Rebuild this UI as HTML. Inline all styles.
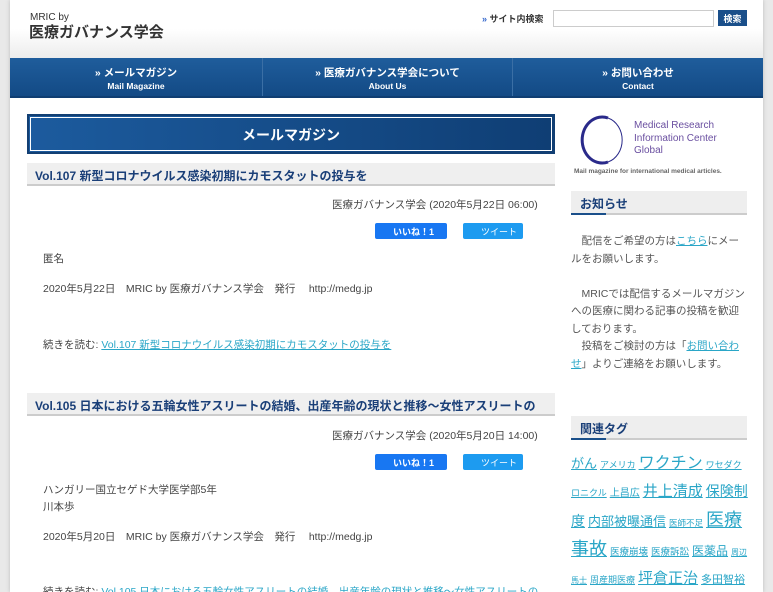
<!DOCTYPE html>
<html><head><meta charset="utf-8"><style>
*{margin:0;padding:0;box-sizing:border-box}
html,body{width:773px;height:592px;overflow:hidden}
body{background:#e9e9e9;font-family:"Liberation Sans","Noto Sans CJK JP",sans-serif;color:#444;font-size:10.5px;position:relative}
.wrap{position:absolute;left:10px;top:0;width:753px;height:592px;background:#fff;box-shadow:0 0 4px #bbb}
.hdr{position:absolute;left:10px;top:0;width:753px;height:58px;background:linear-gradient(#fff 50%,#ececec)}
.abs{position:absolute}
.nav{position:absolute;left:10px;top:58px;width:753px;height:40px;background:linear-gradient(#1f5d9c,#134a85);border-bottom:2px solid #0f3e72}
.nav .c{position:absolute;top:0;height:38px;color:#fff;text-align:center;font-weight:bold}
.nav .j{font-size:10.5px;margin-top:7px}.nav .e{font-size:8.5px;margin-top:1px}
a{color:#2aa6c7;text-decoration:underline}
.h2{position:absolute;left:27px;width:528px;height:23px;background:#efefef;border-bottom:2px solid #ccc;color:#1a3f78;font-size:12px;font-weight:bold;padding:4px 0 0 8px;white-space:nowrap;overflow:hidden}
.h2 i{position:absolute;left:0;bottom:-2px;width:105px;height:2px;background:#1a4f8a}
.sh{position:absolute;left:571px;width:176px;height:24px;background:#eee;border-bottom:2px solid #ccc;color:#1a3f78;font-size:12px;font-weight:bold;padding:4px 0 0 9px}
.sh:after{content:"";position:absolute;left:0;bottom:-2px;width:35px;height:2px;background:#1a4f8a}
.fb{position:absolute;width:72px;height:16px;background:#1877f2;color:#fff;border-radius:2px;font-size:9px;font-weight:bold;padding:2px 0 0 18px}
.tw{position:absolute;width:60px;height:16px;background:#1d9bf0;color:#fff;border-radius:2px;font-size:9px;padding:2px 0 0 18px}
.t{font-size:10.5px;white-space:nowrap}
.tags{position:absolute;left:571px;top:451px;width:178px;line-height:26px;word-break:break-all}
.tags a{margin-right:3px}
</style></head><body>
<div class="wrap"></div>
<div class="hdr"></div>
<div class="abs" style="left:30px;top:12px;font-size:10px;color:#333">MRIC by</div>
<div class="abs" style="left:29px;top:21px;font-size:15px;color:#333;font-weight:bold">医療ガバナンス学会</div>
<div class="abs" style="left:482px;top:12px;font-size:9px;color:#333;font-weight:bold"><span style="color:#36c">»</span> サイト内検索</div>
<div class="abs" style="left:553px;top:10px;width:161px;height:17px;border:1px solid #ccc;background:#fff"></div>
<div class="abs" style="left:718px;top:10px;width:29px;height:16px;background:#1a4f8a;color:#fff;font-size:9px;font-weight:bold;text-align:center;padding-top:2px">検索</div>
<div class="nav">
<div class="c" style="left:0;width:253px;border-right:1px solid #3b6fa5"><div class="j">» メールマガジン</div><div class="e">Mail Magazine</div></div>
<div class="c" style="left:253px;width:250px;border-right:1px solid #3b6fa5"><div class="j">» 医療ガバナンス学会について</div><div class="e">About Us</div></div>
<div class="c" style="left:503px;width:250px"><div class="j">» お問い合わせ</div><div class="e">Contact</div></div>
</div>
<div class="abs" style="left:27px;top:114px;width:528px;height:40px;background:linear-gradient(90deg,#1c5b9e,#0f3e74);border:2px solid #123f73;outline:1px solid #fff;outline-offset:-4px;color:#fff;font-size:14px;font-weight:bold;text-align:center;padding-top:9px">メールマガジン</div>
<div class="h2" style="top:163px">Vol.107 新型コロナウイルス感染初期にカモスタットの投与を<i></i></div>
<div class="abs t" style="left:332px;top:197px">医療ガバナンス学会 (2020年5月22日 06:00)</div>
<div class="fb" style="left:375px;top:223px">いいね！1</div><div class="tw" style="left:463px;top:223px">ツイート</div>
<div class="abs t" style="left:43px;top:251px">匿名</div>
<div class="abs t" style="left:43px;top:281px">2020年5月22日　MRIC by 医療ガバナンス学会　発行　 http://medg.jp</div>
<div class="abs t" style="left:43px;top:337px">続きを読む: <a>Vol.107 新型コロナウイルス感染初期にカモスタットの投与を</a></div>
<div class="h2" style="top:393px">Vol.105 日本における五輪女性アスリートの結婚、出産年齢の現状と推移～女性アスリートの<i></i></div>
<div class="abs t" style="left:332px;top:428px">医療ガバナンス学会 (2020年5月20日 14:00)</div>
<div class="fb" style="left:375px;top:454px">いいね！1</div><div class="tw" style="left:463px;top:454px">ツイート</div>
<div class="abs t" style="left:43px;top:482px">ハンガリー国立セゲド大学医学部5年</div>
<div class="abs t" style="left:43px;top:499px">川本歩</div>
<div class="abs t" style="left:43px;top:529px">2020年5月20日　MRIC by 医療ガバナンス学会　発行　 http://medg.jp</div>
<div class="abs t" style="left:43px;top:584px">続きを読む: <a>Vol.105 日本における五輪女性アスリートの結婚、出産年齢の現状と推移～女性アスリートの</a></div>
<svg class="abs" style="left:578px;top:114px" width="50" height="52"><path d="M30 4 A 20 23 0 1 0 30 48" fill="none" stroke="#2a2a8a" stroke-width="3"/><path d="M30 4 A 20 23 0 0 1 30 48" fill="none" stroke="#2a2a8a" stroke-width="1"/></svg>
<div class="abs" style="left:634px;top:120px;font-size:10px;color:#6a4fa0;line-height:12.5px">Medical Research<br>Information Center<br>Global</div>
<div class="abs" style="left:574px;top:168px;font-size:6.5px;color:#666;font-weight:bold">Mail magazine for international medical articles.</div>
<div class="sh" style="top:191px">お知らせ</div>
<div class="abs" style="left:571px;top:233px;width:178px;font-size:10.5px;line-height:17.5px;color:#555">　配信をご希望の方は<a>こちら</a>にメールをお願いします。<br><br>　MRICでは配信するメールマガジンへの医療に関わる記事の投稿を歓迎しております。<br>　投稿をご検討の方は「<a>お問い合わせ</a>」よりご連絡をお願いします。</div>
<div class="sh" style="top:416px">関連タグ</div>
<div class="tags"><a style="font-size:13px">がん</a><a style="font-size:9px">アメリカ</a><a style="font-size:16px">ワクチン</a><a style="font-size:9px">ワセダクロニクル</a><a style="font-size:10px">上昌広</a><a style="font-size:15px">井上清成</a><a style="font-size:14px">保険制度</a><a style="font-size:13px">内部被曝通信</a><a style="font-size:8.5px">医師不足</a><a style="font-size:18px">医療事故</a><a style="font-size:9.5px">医療崩壊</a><a style="font-size:9.5px">医療訴訟</a><a style="font-size:12px">医薬品</a><a style="font-size:8px">周辺馬士</a><a style="font-size:9px">周産期医療</a><a style="font-size:15px">坪倉正治</a><a style="font-size:11px">多田智裕</a><a style="font-size:13px">大西睦子</a><a style="font-size:16px">小松秀樹</a><a style="font-size:8px">小児科</a></div>
</body></html>
